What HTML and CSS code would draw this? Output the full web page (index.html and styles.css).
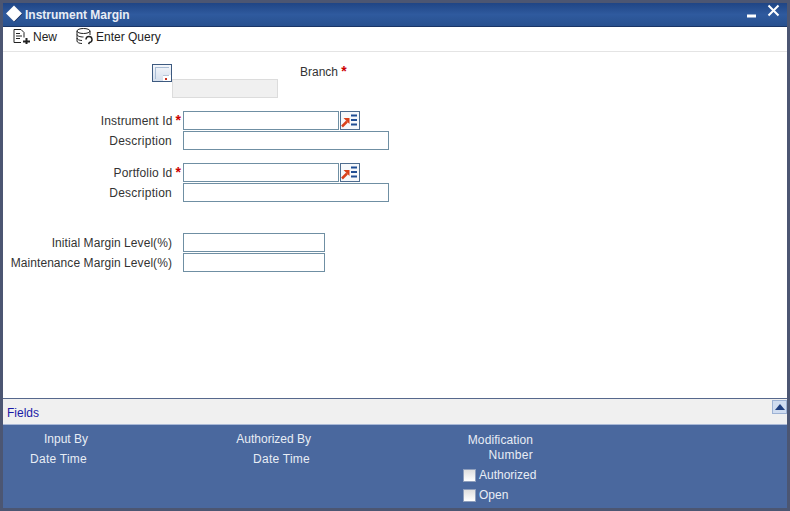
FILE: index.html
```html
<!DOCTYPE html>
<html lang="en">
<head>
    <meta charset="UTF-8">
    <title>Instrument Margin</title>
    <link rel="stylesheet" href="styles.css">
</head>
<body>
<div class="window">
    <!-- title bar -->
    <div class="titlebar">
        <svg class="title-icon" width="18" height="18" viewBox="0 0 18 18"><path d="M9.500 1l8 8-8 8-8-8z" fill="#10244f"/><path d="M9 .5l8 8-8 8-8-8z" fill="#fff"/></svg>
        <span class="title-text">Instrument Margin</span>
        <svg class="win-min" width="10" height="4" viewBox="0 0 10 4"><rect y="0.500" width="9" height="3" fill="#fff"/></svg>
        <svg class="win-close" width="13" height="13" viewBox="0 0 13 13"><path d="M1.500 1.500l10 10M11.500 1.500l-10 10" stroke="#fff" stroke-width="2"/></svg>
    </div>

    <!-- toolbar -->
    <div class="toolbar">
        <span class="tool">
            <svg width="18" height="16" viewBox="0 0 18 16" fill="none" stroke="#222"><path d="M1 .5h7l3 3v5M1 .5v13h7M3 4.500h4M3 7h6M3 9.500h4"/><path d="M13.500 9v6M10 12.500h7" stroke-width="2"/></svg>
            New
        </span>
        <span class="tool tool-query">
            <svg width="17" height="17" viewBox="0 0 17 17" fill="none" stroke="#222"><ellipse cx="7.500" cy="3" rx="6.500" ry="2.500"/><path d="M1 3v10c0 1.500 2.500 2.500 5 2.500M14 3v4M1 6.500c0 1.500 3 2.500 6.500 2.500M1 10c0 1.500 2.500 2.500 5 2.500"/><path d="M10 11.500a3 3 0 1 1 3.500 3l-1 1.500" stroke-width="1.500"/></svg>
            Enter Query
        </span>
    </div>

    <!-- form -->
    <div class="form">
        <div class="branch-row">
            <div class="branch-left">
                <button class="pick-btn">
                    <svg width="18" height="16" viewBox="0 0 18 16"><path d="M2 2h14v1H3v11H2z" fill="#a9bcd4"/><path d="M10 10h8v6h-8z" fill="#fff"/><path d="M10 10.500h6" stroke="#b5c5d8"/><path d="M12 13h2v2h-2z" fill="#c8301f"/></svg>
                </button>
                <div class="branch-box"></div>
            </div>
            <label class="branch-label">Branch <b class="req-branch">*</b></label>
        </div>

        <div class="row row-first">
            <label class="label-req">Instrument Id<b class="req">*</b></label>
            <input class="input-id" type="text">
            <button class="lov-btn">
                <svg width="18" height="15" viewBox="0 0 18 15"><path d="M1 13.500L6 8.500" fill="none" stroke="#d9401a" stroke-width="2.500"/><path d="M2.500 5H8.500v6z" fill="#d9401a"/><path d="M10 2.500h6M10 7h6M10 11.500h6" stroke="#1f4d94" stroke-width="2"/></svg>
            </button>
        </div>
        <div class="row">
            <label class="label-desc">Description</label>
            <input class="input-desc" type="text">
        </div>

        <div class="row row-group">
            <label class="label-req">Portfolio Id<b class="req">*</b></label>
            <input class="input-id" type="text">
            <button class="lov-btn">
                <svg width="18" height="15" viewBox="0 0 18 15"><path d="M1 13.500L6 8.500" fill="none" stroke="#d9401a" stroke-width="2.500"/><path d="M2.500 5H8.500v6z" fill="#d9401a"/><path d="M10 2.500h6M10 7h6M10 11.500h6" stroke="#1f4d94" stroke-width="2"/></svg>
            </button>
        </div>
        <div class="row">
            <label class="label-desc">Description</label>
            <input class="input-desc" type="text">
        </div>

        <div class="row row-margin">
            <label class="label-wide">Initial Margin Level(%)</label>
            <input class="input-level" type="text">
        </div>
        <div class="row">
            <label class="label-wide">Maintenance Margin Level(%)</label>
            <input class="input-level" type="text">
        </div>
    </div>

    <!-- fields strip -->
    <div class="fields-bar">
        <span class="fields-link">Fields</span>
        <button class="collapse-btn"><span class="arrow-up"></span></button>
    </div>

    <!-- audit footer -->
    <div class="audit">
        <div class="audit-col col-input">
            <span>Input By</span>
            <span class="date-time">Date Time</span>
        </div>
        <div class="audit-col col-auth">
            <span>Authorized By</span>
            <span class="date-time">Date Time</span>
        </div>
        <div class="audit-col col-mod">
            <span class="mod-title">Modification</span>
            <span class="mod-number">Number</span>
            <div class="checks">
                <label class="check"><i class="box"></i>Authorized</label>
                <label class="check"><i class="box"></i>Open</label>
            </div>
        </div>
    </div>
</div>
</body>
</html>
```
FILE: styles.css
```css
* {
    box-sizing: border-box;
}
html, body {
    margin: 0;
    height: 100%;
    overflow: hidden;
}
body {
    font-family: "Liberation Sans", Arial, sans-serif;
    font-size: 12px;
    color: #333;
    background: #4c5672;
}
.window {
    display: flex;
    flex-direction: column;
    width: 790px;
    height: 511px;
    padding: 3px;
    background: #4c5672;
}
.titlebar {
    display: flex;
    align-items: center;
    height: 24px;
    padding: 0 0 0 2px;
    background: linear-gradient(#1f4585, #2f5a9e 50%, #27508f);
    border-bottom: 1px solid #1a3566;
    flex: none;
}
.title-icon {
    margin-top: -1px;
}
.title-text {
    margin-left: 2px;
    margin-right: auto;
    font-weight: bold;
    color: #e8edf5;
}
.win-min {
    margin: 2px 10px 0 0;
}
.win-close {
    margin: -8px 7px 0 0;
}
.toolbar {
    display: flex;
    align-items: center;
    height: 25px;
    padding: 0 0 5px 10px;
    background: #fff;
    border-bottom: 1px solid #e4e4e4;
    flex: none;
    color: #222;
}
.tool {
    display: flex;
    align-items: center;
    gap: 2px;
}
.tool-query {
    gap: 3px;
    margin-left: 19px;
}
.form {
    flex: 1;
    background: #fff;
    border-bottom: 1px solid #56688c;
}
.branch-row {
    display: flex;
    height: 50px;
    padding-top: 12px;
}
.branch-left {
    display: flex;
    flex-direction: column;
    width: 275px;
    padding-left: 149px;
}
.pick-btn {
    width: 20px;
    height: 18px;
    padding: 0;
    background: linear-gradient(#f4f7fb, #d5dfec);
    border: 1px solid #3d5a80;
    flex: none;
}
.pick-btn svg {
    display: block;
}
.branch-box {
    width: 106px;
    height: 19px;
    margin-left: 20px;
    margin-top: -3px;
    background: #f0f0f0;
    border: 1px solid #dcdcdc;
    flex: none;
}
.branch-label {
    margin-left: 22px;
    line-height: 16px;
}
.req-branch,
.req {
    color: #cc0000;
    font-size: 14px;
    font-weight: bold;
    line-height: 12px;
}
.req {
    margin-right: -9px;
    padding-left: 3px;
}
.row {
    display: flex;
    align-items: center;
    height: 20px;
}
.row label {
    width: 169px;
    margin-top: 2px;
    text-align: right;
    white-space: nowrap;
}
.row .label-req {
    letter-spacing: .12px;
}
.row .label-desc {
    letter-spacing: .25px;
}
.row .label-wide {
    letter-spacing: .07px;
}
.row input {
    height: 19px;
    margin: 0 0 0 11px;
    padding: 0 2px;
    background: #fff;
    border: 1px solid #6f8fa3;
    border-radius: 0;
}
.row-first {
    margin-top: 8px;
}
.row-group {
    margin-top: 12px;
}
.row-margin {
    margin-top: 30px;
}
.input-id {
    width: 156px;
}
.input-desc {
    width: 206px;
}
.input-level {
    width: 142px;
}
.lov-btn {
    display: flex;
    align-items: center;
    justify-content: center;
    width: 20px;
    height: 19px;
    margin-left: 1px;
    padding: 0;
    background: #f6f8fb;
    border: 1px solid #4d6c8f;
}
.fields-bar {
    display: flex;
    align-items: center;
    justify-content: space-between;
    height: 26px;
    padding-left: 4px;
    background: #f0f0f0;
    border-bottom: 1px solid #a9b8d6;
    flex: none;
}
.fields-link {
    margin-top: 2px;
    color: #1a1aa6;
}
.collapse-btn {
    align-self: flex-start;
    width: 15px;
    height: 14px;
    margin-top: 1px;
    padding: 0;
    background: #cfdcf0;
    border: 1px solid #9db2d4;
}
.arrow-up {
    display: block;
    width: 0;
    height: 0;
    margin: 0 auto;
    border-left: 5px solid transparent;
    border-right: 5px solid transparent;
    border-bottom: 6px solid #1f3f80;
}
.audit {
    display: flex;
    height: 83px;
    padding-top: 5px;
    background: #4a689e;
    color: #e8edf5;
    flex: none;
}
.audit-col {
    display: flex;
    flex-direction: column;
    align-items: flex-end;
    line-height: 19px;
}
.col-input {
    width: 85px;
}
.date-time {
    margin-top: 1px;
    margin-right: 1px;
    letter-spacing: .25px;
}
.col-auth {
    width: 223px;
}
.col-mod {
    width: 222px;
    margin-top: 3px;
    line-height: 15px;
}
.mod-title {
    letter-spacing: .1px;
}
.mod-number {
    margin-bottom: 2px;
    letter-spacing: .3px;
}
.checks {
    width: 74px;
    margin-right: -4px;
}
.check {
    display: flex;
    align-items: center;
    height: 20px;
}
.box {
    width: 13px;
    height: 13px;
    margin-right: 3px;
    background: linear-gradient(#dedede, #fff);
    border: 1px solid #8f9fbd;
}
```
